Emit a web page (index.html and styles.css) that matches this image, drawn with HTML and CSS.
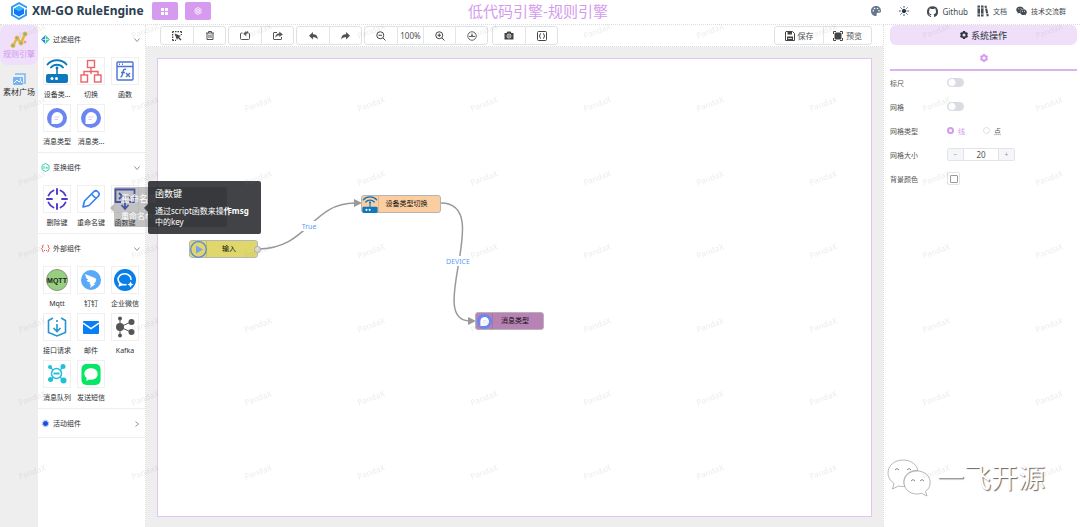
FILE: index.html
```
<!DOCTYPE html>
<html lang="zh-CN">
<head>
<meta charset="utf-8">
<title>XM-GO RuleEngine</title>
<link rel="stylesheet" href="styles.css">
</head>
<body>
<svg class="defs" aria-hidden="true">
  <symbol id="router" viewBox="0 0 22 24"><rect x="0" y="15" width="22" height="9" rx="2" fill="#0d78bd"/><path d="M11 8v8" stroke="#0d78bd" stroke-width="1.600"/><circle cx="11" cy="9" r="1.400" fill="#0d78bd"/><path d="M1.500 5.500C6-.2 16-.2 20.500 5.500M5 8.500c3-3.600 9-3.600 12 0" fill="none" stroke="#0d78bd" stroke-width="1.900" stroke-linecap="round"/><circle cx="6" cy="19.500" r="1.500" fill="#fff"/><circle cx="10.500" cy="19.500" r="1.500" fill="#fff"/></symbol>
  <symbol id="message" viewBox="0 0 20 20"><circle cx="10" cy="10" r="10" fill="#6b85f3"/><path d="M10 4a6 6 0 1 1 0 12H4.500V10A6 6 0 0 1 10 4z" fill="#fff"/><path d="M7.500 9h5M7.500 11.500h3.500" stroke="#c9d3fb"/></symbol>
  <symbol id="chevron" viewBox="0 0 6 6"><path d="M.5 1.500L3 4.500l2.500-3" fill="none" stroke="#777" stroke-width=".8"/></symbol>
  <symbol id="gear" viewBox="0 0 16 16"><path fill="currentColor" fill-rule="evenodd" d="M6 0h4l.6 2.200 1.200.7 2.200-.6 2 3.400L14.400 7.300v1.400L16 10.300l-2 3.400-2.200-.6-1.200.7L10 16H6l-.6-2.200-1.200-.7-2.200.6-2-3.400 1.600-1.600V7.300L0 5.700l2-3.400 2.200.6 1.200-.7zM8 5a3 3 0 1 0 0 6 3 3 0 0 0 0-6z"/></symbol>
  <symbol id="reply" viewBox="0 0 16 14"><path fill="currentColor" d="M7 0v4c6 0 8.500 3 8.500 9-1.500-3-4-4-8.500-4v4L0 6.500z"/></symbol>
  <symbol id="wechat" viewBox="0 0 44 38"><path d="M16 1C7.500 1 1 6.500 1 14c0 4.500 2.500 8 6 10.500L5.500 30l6-3c1.500.4 3 .5 4.500.5h2C14 18 22 10.500 31 11.500 29.500 5 23.500 1 16 1z"/><path d="M30 12c-7.500 0-13 5-13 11.500S22.500 35 30 35c1.500 0 3-.2 4.500-.7L40 37l-1.500-4.500c3-2.300 4.700-5.300 4.700-9C43.200 17 37.500 12 30 12z"/></symbol>
</svg>

<header class="header">
  <div class="brand">
    <svg width="18" height="18" viewBox="0 0 18 18"><path d="M9 0l8 4.500v2L9 2.200 3 5.500v7L9 16l6-3.500V8l2-1v6.500L9 18l-8-4.500v-9z" fill="#2f9cf4"/><path d="M9 4l5 2.700v5L9 14.500l-5-2.800v-5z" fill="#1477f5"/><path d="M9 4l5 2.700-5 2.600-5-2.600z" fill="#35b8f8"/></svg>
    <h1 class="brand-name">XM-GO RuleEngine</h1>
    <button class="brand-btn" type="button" aria-label="应用"><svg width="7" height="7" viewBox="0 0 7 7" fill="#fff"><path d="M0 0h3v3H0zM4 0h3v3H4zM0 4h3v3H0zM4 4h3v3H4z"/></svg></button>
    <button class="brand-btn" type="button" aria-label="设置"><svg width="8" height="8" viewBox="0 0 16 16" fill="none" stroke="#fff" stroke-width="1.500"><path d="M8 1l6 3.500v7L8 15l-6-3.500v-7z"/><circle cx="8" cy="8" r="3.500"/><circle cx="8" cy="8" r=".8"/></svg></button>
  </div>
  <h2 class="title">低代码引擎-规则引擎</h2>
  <nav class="links">
    <button class="plain palette" type="button" aria-label="主题"><svg width="10" height="10" viewBox="0 0 20 20"><path fill="#66788c" fill-rule="evenodd" d="M10 0C4 0 0 4.500 0 10s4 10 9 10c2 0 3-1.300 2.400-3-.7-2 .3-3.500 2.300-3.500H17c2 0 3-1.500 3-3.500C20 4 16 0 10 0zM4.500 8a1.600 1.600 0 1 1 0 3.200 1.600 1.600 0 0 1 0-3.200zM7 3.500A1.600 1.600 0 1 1 7 6.700 1.600 1.600 0 0 1 7 3.500zm6 0a1.600 1.600 0 1 1 0 3.200 1.600 1.600 0 0 1 0-3.200zM16 8a1.600 1.600 0 1 1 0 3.200A1.600 1.600 0 0 1 16 8z"/></svg></button>
    <button class="plain sun" type="button" aria-label="亮色"><svg width="10" height="10" viewBox="0 0 20 20" stroke="#22384c" stroke-width="2" stroke-linecap="round"><circle cx="10" cy="10" r="3.500" fill="#22384c"/><path d="M10 1v1.500M10 17.500V19M1 10h1.500M17.500 10H19M3.600 3.600l1 1M15.400 15.400l1 1M3.600 16.400l1-1M15.400 4.600l1-1"/></svg></button>
    <a class="link latin" href="#"><svg width="11" height="11" viewBox="0 0 24 24"><path fill="#454b52" d="M12 .5a12 12 0 0 0-3.800 23.400c.6.1.8-.3.800-.6v-2.200c-3.300.7-4-1.400-4-1.400-.6-1.400-1.400-1.800-1.400-1.800-1-.7.1-.7.1-.7 1.200.1 1.900 1.200 1.900 1.200 1 1.800 2.800 1.300 3.500 1 .1-.8.400-1.300.8-1.600-2.700-.3-5.500-1.300-5.500-6 0-1.200.5-2.300 1.300-3.100-.2-.4-.6-1.600 0-3.200 0 0 1-.3 3.400 1.200a11.500 11.500 0 0 1 6 0c2.300-1.500 3.300-1.200 3.300-1.200.7 1.600.2 2.800.1 3.200.8.8 1.300 1.900 1.300 3.200 0 4.600-2.800 5.600-5.500 5.900.5.400.9 1 .9 2.200v3.300c0 .3.100.7.800.6A12 12 0 0 0 12 .5z"/></svg><span>Github</span></a>
    <a class="link" href="#"><svg width="12" height="12" viewBox="0 0 24 24" fill="#454b52"><path d="M1 1h5v22H1zM8 1h5v22H8zM15 2l4-1 4.500 21-4 1z"/><path d="M1 6h5M8 6h5M1 18h5M8 18h5M16 7l4-1M18 18l4-1" stroke="#fff" stroke-width="1.500"/></svg><span>文档</span></a>
    <a class="link" href="#"><svg width="11" height="10" viewBox="0 0 44 38" fill="#454b52"><use href="#wechat"/><g fill="#fff"><circle cx="11" cy="10" r="2"/><circle cx="20" cy="10" r="2"/><circle cx="26" cy="20" r="2"/><circle cx="34" cy="20" r="2"/></g></svg><span>技术交流群</span></a>
  </nav>
</header>

<div class="layout">
  <nav class="rail">
    <a class="rail-item active" href="#">
      <svg width="18" height="18" viewBox="0 0 18 18"><path d="M3 15l4-8 4 5 4-9" fill="none" stroke="#e8b53c" stroke-width="2.500"/><g fill="#79bd85" stroke="#f0b83d" stroke-width="1"><circle cx="3" cy="14.500" r="2"/><circle cx="7" cy="7" r="2"/><circle cx="11" cy="12" r="2"/><circle cx="15" cy="3" r="2"/></g><circle cx="15" cy="11" r="1.500" fill="#ef9c91"/></svg>
      <span>规则引擎</span></a>
    <a class="rail-item" href="#">
      <svg width="14" height="14" viewBox="0 0 14 14"><path d="M3 1h10v9h-1.500" fill="none" stroke="#7db9f2" stroke-width="1.500"/><rect x="1" y="4" width="10" height="8" rx="1" fill="#73b4f3"/><path d="M2 10l3-3 2 2 1.500-1.500L10 10" fill="none" stroke="#fff"/><circle cx="8.500" cy="6" r=".8" fill="#fff"/></svg>
      <span>素材广场</span></a>
  </nav>

  <aside class="palette-panel">
    <section class="group">
      <button class="group-head" type="button"><svg width="9" height="9" viewBox="0 0 18 18"><path d="M9 0v18L0 9z" fill="#2f7de8"/><path d="M9 0v18l9-9z" fill="#3fd39b"/><path d="M9 3v12M3 9h12" stroke="#fff" stroke-width="1.500"/></svg><span>过滤组件</span><svg class="chev" width="6" height="6"><use href="#chevron"/></svg></button>
      <div class="tiles">
        <div class="tile"><i class="box"><svg width="22" height="24"><use href="#router"/></svg></i><span>设备类...</span></div>
        <div class="tile"><i class="box"><svg width="22" height="24" viewBox="0 0 22 24" fill="#fff" stroke="#ea6468" stroke-width="1.400"><path d="M11 9v6M4 16v-3.500h14V16" fill="none"/><rect x="7.500" y="1.500" width="7" height="7"/><rect x="1" y="16" width="6.500" height="7"/><rect x="14.500" y="16" width="6.500" height="7"/></svg></i><span>切换</span></div>
        <div class="tile"><i class="box"><svg width="18" height="20" viewBox="0 0 18 20" fill="none" stroke="#4b71d2" stroke-width="1.400"><rect x="1" y="1" width="16" height="18" rx="1"/><path d="M1 5.500h16M3 3.300h1M6 3.300h1M10 8.500c-2-1-2.500 0-3 2.500s-.8 5-2.500 5M5 11.500h4M10 12l4 4M14 12l-4 4"/></svg></i><span>函数</span></div>
        <div class="tile"><i class="box"><svg width="20" height="20"><use href="#message"/></svg></i><span>消息类型</span></div>
        <div class="tile"><i class="box"><svg width="20" height="20"><use href="#message"/></svg></i><span>消息类...</span></div>
      </div>
    </section>
    <section class="group">
      <button class="group-head" type="button"><svg width="9" height="9" viewBox="0 0 18 18" fill="none" stroke="#37cda5" stroke-width="2"><path d="M9 1l7 4v8l-7 4-7-4V5z"/><path d="M6 6v6M12 12V8L9 10"/></svg><span>变换组件</span><svg class="chev" width="6" height="6"><use href="#chevron"/></svg></button>
      <div class="tiles">
        <div class="tile"><i class="box"><svg width="22" height="22" viewBox="0 0 22 22" fill="none" stroke="#4c38cf" stroke-width="1.900" stroke-linecap="round"><path d="M11 1v5M11 16v5M1 11h5M16 11h5M2.500 7.500Q4 4 7.500 2.500M14.500 2.500Q18 4 19.500 7.500M19.500 14.500Q18 18 14.500 19.500M7.500 19.500Q4 18 2.500 14.500"/></svg></i><span>删除键</span></div>
        <div class="tile"><i class="box"><svg width="20" height="20" viewBox="0 0 20 20" fill="none" stroke="#3881f4" stroke-width="1.700" stroke-linejoin="round"><path d="M2 18l1.500-6L13 2.500q2-1.500 3.500 0l1 1q1.500 1.500 0 3.500L8 16.500zM10.500 5l4.500 4.500"/></svg></i><span>重命名键</span></div>
        <div class="tile has-tip"><i class="box"><svg width="22" height="24" viewBox="0 0 22 24" fill="none" stroke="#4057ce" stroke-width="1.800"><path d="M7 15H1.500V2.500h19V15H15M5 6l3 3-3 3M10 10.500h6M11 13v8M7.500 18l3.500 4 3.500-4"/></svg></i><span>函数键</span>
          <div class="tip ghost"><strong>重命名键</strong><p>重命名msg中的key</p></div>
          <div class="tip" role="tooltip"><strong>函数键</strong><p>通过script函数来操<b>作msg</b>中的key</p></div>
        </div>
      </div>
    </section>
    <section class="group">
      <button class="group-head" type="button"><svg width="9" height="9" viewBox="0 0 18 18" fill="none" stroke="#ed4b45" stroke-width="2"><path d="M5 2Q3 2 3 5t-2 4q2 1 2 4t2 3M13 2q2 0 2 3t2 4q-2 1-2 4t-2 3"/><path d="M6 13h2M10 13h2"/></svg><span>外部组件</span><svg class="chev" width="6" height="6"><use href="#chevron"/></svg></button>
      <div class="tiles">
        <div class="tile"><i class="box"><svg width="22" height="22" viewBox="0 0 22 22"><circle cx="11" cy="11" r="10.500" fill="#96cf80" stroke="#89947f"/><text class="mqtt" x="11" y="14" text-anchor="middle">MQTT</text></svg></i><span>Mqtt</span></div>
        <div class="tile"><i class="box"><svg width="20" height="20" viewBox="0 0 20 20"><circle cx="10" cy="10" r="10" fill="#58a9f8"/><path d="M4 4l10 4q2 1 1 3l-2 3h1.500L9 18l1-3.500H8.500l.7-2Q6 12 5.500 10l2 .3Q4.500 8 4 4z" fill="#fff"/></svg></i><span>钉钉</span></div>
        <div class="tile"><i class="box"><svg width="22" height="22" viewBox="0 0 22 22"><circle cx="11" cy="11" r="11" fill="#087fe8"/><path d="M17 11a6.500 5.500 0 1 0-4.500 4.500M6 13.500L5.500 16.500l3-1" fill="none" stroke="#fff" stroke-width="1.600"/><path d="M16.500 12.500l1 2 2 1-2 1-1 2-1-2-2-1 2-1z" fill="#fff"/></svg></i><span>企业微信</span></div>
        <div class="tile"><i class="box"><svg width="20" height="20" viewBox="0 0 20 20" fill="none" stroke="#2595cf" stroke-width="1.600"><path d="M6 1L1.500 3.500v12L10 19l8.500-3.500v-12L14 1M10 3v2M10 7v7M6.500 11l3.500 3.500 3.500-3.500"/></svg></i><span>接口请求</span></div>
        <div class="tile"><i class="box"><svg width="16" height="13" viewBox="0 0 16 13"><rect width="16" height="13" rx="1" fill="#087ff5"/><path d="M0 2l8 5.500L16 2" fill="none" stroke="#fff" stroke-width="1.500"/></svg></i><span>邮件</span></div>
        <div class="tile"><i class="box"><svg width="20" height="22" viewBox="0 0 20 22" fill="#555"><path d="M5 3v16M5 11l11-5M5 11l11 5" stroke="#555"/><circle cx="5" cy="11" r="4"/><circle cx="5" cy="2.500" r="2"/><circle cx="5" cy="19.500" r="2"/><circle cx="16.500" cy="6" r="3"/><circle cx="16.500" cy="16" r="3"/></svg></i><span>Kafka</span></div>
        <div class="tile"><i class="box"><svg width="20" height="20" viewBox="0 0 20 20" fill="#22bfd9"><path d="M3 3l14 14M16 3L4 16" stroke="#22bfd9" stroke-width="1.300"/><circle cx="9.500" cy="9.500" r="5" fill="#fff" stroke="#22bfd9" stroke-width="1.500"/><path d="M6.500 9.500h6" stroke="#22bfd9" stroke-width="2"/><circle cx="3" cy="3" r="2"/><circle cx="16" cy="2.500" r="2.500"/><circle cx="3.500" cy="15.500" r="2.500"/><circle cx="16.500" cy="16.500" r="3"/></svg></i><span>消息队列</span></div>
        <div class="tile"><i class="box"><svg width="20" height="21" viewBox="0 0 20 22"><rect width="20" height="22" rx="5" fill="#05e765"/><path d="M10 4.500c4.500 0 7 2.700 7 6s-2.500 6-7 6q-1 0-2-.3l-3 1.500.5-2.700Q3 13 3 10.500c0-3.300 2.500-6 7-6z" fill="#fff"/></svg></i><span>发送短信</span></div>
      </div>
    </section>
    <section class="group closed">
      <button class="group-head" type="button"><svg width="9" height="9" viewBox="0 0 18 18"><circle cx="9" cy="9" r="5" fill="#1c4ddb"/><circle cx="9" cy="9" r="6.500" fill="none" stroke="#5d80e8" stroke-width="2" stroke-dasharray="2 2"/></svg><span>活动组件</span><svg class="chev side" width="6" height="6"><use href="#chevron"/></svg></button>
    </section>
  </aside>

  <main class="main">
    <div class="toolbar">
      <div class="btns">
        <button type="button" aria-label="框选"><svg width="10" height="10" viewBox="0 0 20 20"><path d="M1 1h18M1 1v18M19 1v7M1 19h7" fill="none" stroke="#444" stroke-width="3" stroke-dasharray="3 2"/><path d="M5 5l13 5-4 2 5 5-2 2-5-5-2 4z" fill="#444"/></svg></button>
        <button type="button" aria-label="删除"><svg width="8" height="9" viewBox="0 0 16 18" fill="none" stroke="#505154" stroke-width="2"><path d="M0 4h16M5 4V1h6v3M2 4v13h12V4M6 7v7M10 7v7"/></svg></button>
      </div>
      <div class="btns">
        <button type="button" aria-label="导入"><svg width="10" height="9" viewBox="0 0 20 18" fill="none" stroke="#555" stroke-width="2"><path d="M5 4H3Q1 4 1 6v9q0 2 2 2h14q2 0 2-2V6q0-2-2-2"/><path d="M16 1q-4 0-4 3V1L7 5.500l5 4V7q0-3 4-3z" fill="#555" stroke-width="1"/></svg></button>
        <button type="button" aria-label="导出"><svg width="10" height="9" viewBox="0 0 20 18" fill="none" stroke="#555" stroke-width="2"><path d="M8 3H2q-1 0-1 1v12q0 1 1 1h14q1 0 1-1v-4"/><path d="M5 12q1-7 8-7V2l6 5-6 4V8q-5 0-8 4z" fill="#555" stroke-width="1"/></svg></button>
      </div>
      <div class="btns">
        <button type="button" aria-label="撤销"><svg width="9" height="8"><use href="#reply"/></svg></button>
        <button type="button" aria-label="重做"><svg class="flip" width="9" height="8"><use href="#reply"/></svg></button>
      </div>
      <div class="btns">
        <button type="button" aria-label="缩小"><svg width="10" height="10" viewBox="0 0 20 20" fill="none" stroke="#444" stroke-width="2"><circle cx="8.500" cy="8.500" r="7"/><path d="M14 14l5 5M5 8.500h7"/></svg></button>
        <span class="percent">100%</span>
        <button type="button" aria-label="放大"><svg width="10" height="10" viewBox="0 0 20 20" fill="none" stroke="#444" stroke-width="2"><circle cx="8.500" cy="8.500" r="7"/><path d="M14 14l5 5M5 8.500h7M8.500 5v7"/></svg></button>
        <button type="button" aria-label="适应"><svg width="10" height="10" viewBox="0 0 20 20" fill="none" stroke="#555" stroke-width="1.800"><circle cx="10" cy="10" r="8.500"/><path d="M10 5v4M4 11h12M8 8l2 2 2-2"/></svg></button>
      </div>
      <div class="btns">
        <button type="button" aria-label="截图"><svg width="10" height="9" viewBox="0 0 20 18"><path d="M1 4h4l2-3h6l2 3h4v13H1z" fill="#444"/><circle cx="10" cy="10" r="4" fill="none" stroke="#fff" stroke-width="1.500"/><path d="M8 10h4M10 8v4" stroke="#fff"/></svg></button>
        <button type="button" aria-label="源码"><svg width="10" height="10" viewBox="0 0 20 20" fill="none" stroke="#444" stroke-width="2"><rect x="1" y="1" width="18" height="18" rx="2"/><path d="M8 5q-2 0-2 2.500T4 10q2 0 2 2.500T8 15M12 5q2 0 2 2.500t2 2.500q-2 0-2 2.500T12 15"/></svg></button>
      </div>
      <div class="btns wide">
        <button type="button"><svg width="10" height="10" viewBox="0 0 20 20"><path d="M2 1h13l4 4v14H1V2z" fill="none" stroke="#444" stroke-width="2"/><path d="M5 1h9v6H5zM4 11h12v8H4z" fill="#444"/><path d="M6 15h8" stroke="#fff" stroke-width="1.500"/></svg><span>保存</span></button>
        <button type="button"><svg width="10" height="10" viewBox="0 0 20 20"><path d="M1 6V1h5M14 1h5v5M19 14v5h-5M6 19H1v-5" fill="none" stroke="#444" stroke-width="2"/><rect x="3" y="3" width="14" height="14" rx="3" fill="#444"/></svg><span>预览</span></button>
      </div>
    </div>
    <div class="stage">
      <div class="canvas">
        <svg class="edges" fill="none" stroke="#999" stroke-width="1.500">
          <path d="M100 190C150 190 153 144 197 144M283 144C337 144 267 262 312 262"/>
          <path d="M196 140l8 4-8 4zM310 258l8 4-8 4z" fill="#999" stroke="none"/>
          <g class="edge-text" stroke="none"><rect x="142" y="162" width="18" height="10"/><text x="151" y="170">True</text><rect x="286" y="197" width="28" height="10"/><text x="300" y="205">DEVICE</text></g>
        </svg>
        <div class="node node-input"><i><svg width="17" height="17" viewBox="0 0 17 17"><circle cx="8.500" cy="8.500" r="7.800" fill="none" stroke="#5c86dc" stroke-width="1.300"/><path d="M6 4.500l7 4-7 4z" fill="#7ba1f0"/></svg></i><span>输入</span><b class="port"></b></div>
        <div class="node node-device"><i><svg width="16" height="17" viewBox="0 0 22 24"><use href="#router"/></svg></i><span>设备类型切换</span></div>
        <div class="node node-message"><i><svg width="15" height="15"><use href="#message"/></svg></i><span>消息类型</span></div>
      </div>
    </div>
  </main>

  <aside class="settings">
    <h2 class="settings-title"><svg width="8" height="8"><use href="#gear"/></svg><span>系统操作</span></h2>
    <button class="tab" type="button" aria-label="设置"><svg width="8" height="8"><use href="#gear"/></svg></button>
    <form class="form">
      <label for="ruler">标尺</label><div><input class="switch" id="ruler" type="checkbox"></div>
      <label for="grid">网格</label><div><input class="switch" id="grid" type="checkbox"></div>
      <span>网格类型</span><div class="radios"><label class="on"><input type="radio" name="kind" checked>线</label><label><input type="radio" name="kind">点</label></div>
      <label for="size">网格大小</label><div><div class="stepper"><button type="button" aria-label="减">−</button><input id="size" type="text" value="20"><button type="button" aria-label="加">+</button></div></div>
      <label for="bg">背景颜色</label><div><button class="swatch" id="bg" type="button" aria-label="背景颜色"><i></i></button></div>
    </form>
  </aside>
</div>

<div class="signature">
  <svg width="44" height="38" viewBox="0 0 44 38"><g fill="#fff" stroke="#999" stroke-width=".7"><use href="#wechat"/></g><path d="M8 11q2-3 4 0M20 11q2-3 4 0M24 22q2-3 4 0M33 22q2-3 4 0" fill="none" stroke="#888"/></svg>
  <span>一飞开源</span>
</div>
<svg class="watermark" aria-hidden="true">
  <defs><pattern id="mark" width="113" height="147" patternUnits="userSpaceOnUse"><text transform="translate(32 31) rotate(-20)" x="0" y="3">PandaX</text><text transform="translate(32 104) rotate(-20)" x="0" y="3">PandaX</text></pattern></defs>
  <rect width="100%" height="100%" fill="url(#mark)"/>
</svg>
</body>
</html>
```

FILE: styles.css
```
* { box-sizing: border-box; }
body { margin: 0; min-height: 100vh; display: flex; flex-direction: column; background: #fff; color: #303133; font-family: "Noto Sans", "Noto Sans CJK SC", sans-serif; font-size: 7px; position: relative; }
h1, h2, p { margin: 0; font-weight: 400; }
button { font: inherit; color: inherit; border: 0; padding: 0; background: none; cursor: pointer; }
a { color: inherit; text-decoration: none; }
svg { display: block; flex: none; }
i { font-style: normal; }
.defs { position: absolute; width: 0; height: 0; }

.header { display: grid; grid-template-columns: 1fr auto 1fr; align-items: center; height: 25px; padding: 0 14px 2px 10px; border-bottom: 1px dotted #ddd; }
.brand { display: flex; align-items: center; }
.brand-name { margin: 0 8px 0 4px; font-size: 12px; line-height: 20px; font-weight: 700; color: #2c3e50; white-space: nowrap; }
.brand-btn { display: flex; align-items: center; justify-content: center; width: 26px; height: 18px; margin-right: 7px; border-radius: 2px; background: #d69bee; }
.title { font-size: 15px; line-height: 22px; color: #d39bed; }
.links { display: flex; align-items: center; justify-content: flex-end; gap: 9px; color: #454b52; }
.palette, .sun { margin-right: 9px; }
.link { display: flex; align-items: center; gap: 4px; white-space: nowrap; }
.latin { font-size: 8px; }

.layout { flex: 1; display: flex; min-height: 0; }
.rail { width: 38px; background: #eee; }
.rail-item { display: flex; flex-direction: column; align-items: center; justify-content: center; height: 40px; border-radius: 8px; font-size: 8px; line-height: 10px; white-space: nowrap; }
.rail-item.active { background: #f0dffa; color: #cf98ec; }

.palette-panel { width: 108px; background: #fff; border-right: 1px dotted #ddd; }
.group { border-bottom: 1px solid #eee; }
.group-head { display: flex; align-items: center; gap: 3px; width: 100%; height: 28px; padding: 1px 5px 0 3px; line-height: 10px; }
.chev { margin-left: auto; }
.side { transform: rotate(-90deg); }
.tiles { display: grid; grid-template-columns: repeat(3, 28px); column-gap: 6px; padding: 4px 0 1px 5px; }
.tile { display: flex; flex-direction: column; align-items: center; position: relative; white-space: nowrap; }
.tile > span { line-height: 19px; }
.box { display: flex; align-items: center; justify-content: center; width: 28px; height: 28px; border: 1px solid #f0f0f0; }
.mqtt { font: 700 7px "Liberation Sans", sans-serif; fill: #222; }
.tip { position: absolute; z-index: 3; left: 37px; top: -4px; width: 113px; padding: 7px; border-radius: 2px; background: rgba(30, 31, 34, .84); color: #fff; font-size: 8px; line-height: 11px; white-space: normal; }
.tip strong { display: block; font-size: 9px; line-height: 12px; font-weight: 400; margin-bottom: 5px; }
.tip::before { content: ""; position: absolute; left: -4px; top: 23px; border: 4px solid transparent; border-left: 0; border-right-color: #414244; }
.tip.ghost { z-index: 2; left: 3px; top: 2px; background: rgba(80, 80, 80, .35); padding: 6px 7px; }
.tip.ghost::before { border-right-color: #b8b8b8; top: 17px; }

.main { flex: 1; min-width: 0; display: flex; flex-direction: column; background: #eee; }
.toolbar { display: flex; gap: 2px; height: 22px; padding: 1px 11px 2px 14px; background: #fff; border-bottom: 1px dotted #ddd; }
.btns { display: flex; height: 19px; border: 1px solid #e0e1e6; border-radius: 3px; background: #fff; color: #505154; font-size: 8px; }
.btns > * { display: flex; align-items: center; justify-content: center; width: 32px; gap: 3px; }
.btns > * + * { border-left: 1px solid #e4e5ea; }
.btns > .percent { width: 26px; }
.btns:nth-child(5) { margin-left: 2px; }
.btns.wide { margin-left: auto; }
.btns.wide > button { width: 48px; }
.flip { transform: scaleX(-1); }
.stage { flex: 1; display: flex; padding: 11px 11px 10px; }
.canvas { flex: 1; position: relative; background: #fff; border: 1px solid #e0c4f1; }
.edges { position: absolute; inset: 0; width: 100%; height: 100%; }
.edge-text { font-size: 7px; text-anchor: middle; fill: #5c9df5; }
.edge-text rect { fill: #fff; }
.node { position: absolute; display: flex; width: 69px; height: 18px; border: 1px solid #b5b5b5; border-radius: 3px; color: #111; }
.node i { display: flex; align-items: center; justify-content: center; width: 17px; border-right: 1px solid rgba(0, 0, 0, .1); }
.node span { flex: 1; padding-right: 6px; text-align: center; line-height: 16px; }
.node-input { left: 31px; top: 181px; background: #dfd76b; }
.node-device { left: 203px; top: 136px; width: 80px; background: #fbcda0; }
.node-message { left: 317px; top: 253px; background: #b883b4; }
.port { position: absolute; right: -4px; top: 5px; width: 7px; height: 7px; border: 1px solid #aaa; border-radius: 50%; background: #ddd; }

.settings { width: 197px; padding: 0 3px 0 6px; border-left: 1px dotted #ddd; background: #fff; }
.settings-title { display: flex; align-items: center; justify-content: center; gap: 3px; height: 20px; border-radius: 6px; background: #f0dff9; color: #2c3440; font-size: 9px; }
.tab { display: flex; align-items: center; justify-content: center; width: 100%; height: 26px; padding-top: 2px; border-bottom: 2px solid #dcb1f1; color: #d49aee; }
.form { display: grid; grid-template-columns: 57px 1fr; grid-auto-rows: 23px; row-gap: 1px; align-items: center; color: #555; }
.form > div { display: flex; align-items: center; }
.switch { appearance: none; width: 17px; height: 9px; margin: 0; border-radius: 5px; background: radial-gradient(circle at 5px 50%, #fff 3px, #d9dce3 4px); }
.radios { gap: 18px; }
.radios label { display: flex; align-items: center; gap: 4px; }
.radios .on { color: #d39bed; }
.radios input { appearance: none; width: 7px; height: 7px; margin: 0; border: 1px solid #dcdfe6; border-radius: 50%; }
.radios input:checked { border: 2px solid #d39bed; }
.stepper { display: flex; width: 68px; height: 13px; border: 1px solid #e2e4e9; border-radius: 2px; overflow: hidden; }
.stepper button { width: 15px; background: #f5f6f9; color: #999; line-height: 11px; }
.stepper input { flex: 1; min-width: 0; border: solid #e2e4e9; border-width: 0 1px; padding: 0; text-align: center; font: inherit; font-size: 8px; color: #555; }
.swatch { display: flex; align-items: center; justify-content: center; width: 13px; height: 13px; border: 1px solid #e2e4e9; border-radius: 2px; }
.swatch i { width: 8px; height: 8px; border: 1px solid #999; border-radius: 1px; }

.signature { position: absolute; right: 35px; bottom: 29px; display: flex; align-items: center; gap: 6px; color: #fff; font-size: 27px; line-height: 40px; text-shadow: 1px 1px 1px #666; }
.watermark { position: absolute; inset: 0; z-index: 9; width: 100%; height: 100%; pointer-events: none; }
.watermark text { font: 8px "Noto Sans", sans-serif; text-anchor: middle; fill: #888; fill-opacity: .17; }
```
